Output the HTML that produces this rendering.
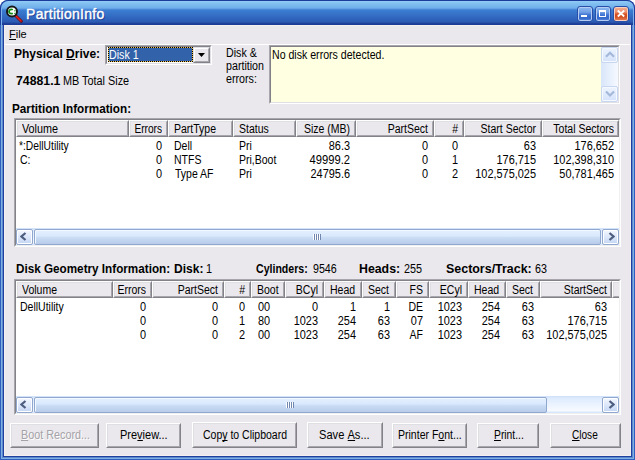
<!DOCTYPE html><html><head><meta charset="utf-8"><style>
*{margin:0;padding:0;box-sizing:border-box}
html,body{width:635px;height:460px;overflow:hidden;background:#fff}
.b{position:absolute}
.t,.tb{position:absolute;font-family:"Liberation Sans",sans-serif;font-size:12px;line-height:13px;white-space:nowrap;color:#000}
.tb{font-weight:bold}
u{text-decoration:none;border-bottom:1px solid currentColor;display:inline-block;line-height:10px}
</style></head><body>
<div class="b" style="left:0;top:0;width:635px;height:460px;background:#2E5EC0;border-radius:8px 8px 0 0"></div>
<div class="b" style="left:0;top:0;width:635px;height:25px;border-radius:8px 8px 0 0;border:1px solid #1C3C9C;border-bottom:none;box-shadow:inset 1px 0 0 #7EB2EC,inset -1px 0 0 #7EB2EC;background:linear-gradient(to bottom,#1E3C9C 0px,#1E3C9C 1px,#92CDF6 1px,#84C2F2 3px,#70AEEA 8px,#5896E0 9px,#3C7ED2 10px,#3A7BD0 11px,#2C5AB4 22px,#24489F 23px,#1C3A96 24px,#1C3A96 25px);background-origin:border-box"></div>
<div class="b" style="left:0px;top:25px;width:1px;height:435px;background:#2E5EC0"></div>
<div class="b" style="left:634px;top:25px;width:1px;height:435px;background:#2E5EC0"></div>
<div class="b" style="left:0px;top:459px;width:635px;height:1px;background:#2E5EC0"></div>
<div class="b" style="left:1px;top:25px;width:1px;height:434px;background:#80B0E0"></div>
<div class="b" style="left:633px;top:25px;width:1px;height:434px;background:#80B0E0"></div>
<div class="b" style="left:1px;top:458px;width:633px;height:1px;background:#80B0E0"></div>
<div class="b" style="left:2px;top:25px;width:1px;height:433px;background:#5C88D0"></div>
<div class="b" style="left:632px;top:25px;width:1px;height:433px;background:#5C88D0"></div>
<div class="b" style="left:2px;top:457px;width:631px;height:1px;background:#5C88D0"></div>
<div class="b" style="left:3px;top:25px;width:1px;height:432px;background:#2040A0"></div>
<div class="b" style="left:631px;top:25px;width:1px;height:432px;background:#2040A0"></div>
<div class="b" style="left:3px;top:456px;width:629px;height:1px;background:#2040A0"></div>
<div class="b" style="left:4px;top:25px;width:627px;height:431px;background:#F5F0F0"></div>
<div class="b" style="left:5px;top:26px;width:625px;height:429px;background:#EAE8EC"></div>
<div class="b" style="left:5px;top:44px;width:625px;height:1px;background:#FFFFFF"></div>
<div class="b" style="left:26px;top:6px;font-family:'Liberation Sans',sans-serif;font-size:14px;line-height:17px;color:#fff;-webkit-text-stroke:0.4px #fff;text-shadow:1px 1px 0 #1E3A90;white-space:nowrap;letter-spacing:0.3px">PartitionInfo</div>
<svg class="b" style="left:5px;top:5px" width="18" height="18" viewBox="0 0 18 18">
<line x1="11" y1="11" x2="16.3" y2="16.3" stroke="#601010" stroke-width="3" stroke-linecap="round"/>
<line x1="11" y1="11" x2="16" y2="16" stroke="#F01818" stroke-width="1.6" stroke-linecap="round"/>
<circle cx="7" cy="6.4" r="5" fill="#fff" stroke="#181818" stroke-width="2"/>
<path d="M7.7 4.9 A2.1 2.2 0 1 0 7.7 8.1" stroke="#108A10" stroke-width="1.7" fill="none"/>
<rect x="9.3" y="5.2" width="1.2" height="1.2" fill="#108A10"/><rect x="9.3" y="7.8" width="1.2" height="1.2" fill="#108A10"/>
</svg>
<div class="b" style="left:577px;top:6px;width:16px;height:16px;border-radius:3px;border:1px solid #2850A8;box-shadow:inset 0 0 0 1px #B4CCF2;background:linear-gradient(to bottom,#8CB8F0 0px,#74A2E6 5px,#3E74D4 8px,#3468CA 11px,#5080D8 13px)"></div>
<div class="b" style="left:595px;top:6px;width:16px;height:16px;border-radius:3px;border:1px solid #2850A8;box-shadow:inset 0 0 0 1px #B4CCF2;background:linear-gradient(to bottom,#8CB8F0 0px,#74A2E6 5px,#3E74D4 8px,#3468CA 11px,#5080D8 13px)"></div>
<div class="b" style="left:613px;top:6px;width:16px;height:16px;border-radius:3px;border:1px solid #2850A8;box-shadow:inset 0 0 0 1px #F8D0C0;background:linear-gradient(to bottom,#F4B090 0px,#EC9070 5px,#D85828 7px,#D04818 9px,#E07850 13px)"></div>
<div class="b" style="left:581px;top:15px;width:6px;height:2px;background:#fff"></div>
<div class="b" style="left:599px;top:10px;width:7px;height:7px;border:1px solid #fff;border-top-width:2px"></div>
<svg class="b" style="left:617px;top:10px" width="8" height="7" viewBox="0 0 8 7"><path d="M0.8 0.5 L7.2 6.5 M7.2 0.5 L0.8 6.5" stroke="#fff" stroke-width="1.9"/></svg>
<div class="t" style="left:9.00px;top:28px;transform:scaleX(1.0000);transform-origin:0 0;font-size:11px;"><u>F</u>ile</div>
<div class="tb" style="left:14.00px;top:48px;transform:scaleX(1.0008);transform-origin:0 0;">Physical <u>D</u>rive:</div>
<div class="b" style="left:105px;top:45px;width:107px;height:20px;background:#fff;border-top:1px solid #A7A6AC;border-left:1px solid #A7A6AC;border-right:1px solid #fff;border-bottom:1px solid #fff"></div>
<div class="b" style="left:106px;top:46px;width:105px;height:18px;border-top:1px solid #828288;border-left:1px solid #828288;border-right:1px solid #E0E0E4;border-bottom:1px solid #E0E0E4"></div>
<div class="b" style="left:108px;top:47px;width:85px;height:15px;border:1px dotted #000;background:#F0C050"></div>
<div class="b" style="left:109px;top:48px;width:83px;height:13px;background:#3262AA"></div>
<div class="t" style="left:109.00px;top:49px;transform:scaleX(0.8900);transform-origin:0 0;color:#fff;">Disk 1</div>
<div class="b" style="left:193px;top:47px;width:17px;height:16px;background:#EAE8EC;border-top:1px solid #DEDFE3;border-left:1px solid #DEDFE3;border-right:1px solid #828288;border-bottom:1px solid #828288"></div>
<div class="b" style="left:194px;top:48px;width:15px;height:14px;border-top:1px solid #fff;border-left:1px solid #fff;border-right:1px solid #A7A6AC;border-bottom:1px solid #A7A6AC"></div>
<svg class="b" style="left:198px;top:53px" width="7" height="4" viewBox="0 0 7 4"><path d="M0 0H7L3.5 4Z" fill="#000"/></svg>
<div class="tb" style="left:16.00px;top:75px;transform:scaleX(1.0233);transform-origin:0 0;">74881.1</div>
<div class="t" style="left:63.00px;top:75px;transform:scaleX(0.9039);transform-origin:0 0;">MB Total Size</div>
<div class="t" style="left:226.00px;top:47px;transform:scaleX(0.8900);transform-origin:0 0;">Disk &amp;</div>
<div class="t" style="left:226.00px;top:60px;transform:scaleX(0.8900);transform-origin:0 0;">partition</div>
<div class="t" style="left:226.00px;top:73px;transform:scaleX(0.8900);transform-origin:0 0;">errors:</div>
<div class="b" style="left:269px;top:45px;width:351px;height:59px;background:#FFFFE1;border-top:1px solid #A7A6AC;border-left:1px solid #A7A6AC;border-right:1px solid #fff;border-bottom:1px solid #fff"></div>
<div class="b" style="left:270px;top:46px;width:349px;height:57px;border-top:1px solid #828288;border-left:1px solid #828288;border-right:1px solid #E0E0E4;border-bottom:1px solid #E0E0E4"></div>
<div class="t" style="left:272.00px;top:49px;transform:scaleX(0.8819);transform-origin:0 0;">No disk errors detected.</div>
<div class="b" style="left:601px;top:47px;width:17px;height:55px;background:linear-gradient(to right,#D8E6FA,#F6F9FF)"></div>
<div class="b" style="left:601px;top:47px;width:17px;height:16px;border-radius:2px;border:1px solid #C8D6F0;box-shadow:inset 0 0 0 1px #F4F8FF;background:linear-gradient(to bottom,#EEF4FE,#D4E2FA)"></div>
<svg class="b" style="left:605px;top:51px" width="10" height="8" viewBox="0 0 10 8"><path d="M1 5.8 L5 1.8 L9 5.8" stroke="#A4B8DA" stroke-width="2.2" fill="none"/></svg>
<div class="b" style="left:601px;top:86px;width:17px;height:16px;border-radius:2px;border:1px solid #C8D6F0;box-shadow:inset 0 0 0 1px #F4F8FF;background:linear-gradient(to bottom,#EEF4FE,#D4E2FA)"></div>
<svg class="b" style="left:605px;top:90px" width="10" height="8" viewBox="0 0 10 8"><path d="M1 1.5 L5 5.5 L9 1.5" stroke="#A4B8DA" stroke-width="2.2" fill="none"/></svg>
<div class="tb" style="left:12.00px;top:103px;transform:scaleX(0.9757);transform-origin:0 0;">Partition Information:</div>
<div class="b" style="left:14px;top:118px;width:607px;height:129px;background:#fff;border-top:1px solid #A7A6AC;border-left:1px solid #A7A6AC;border-right:1px solid #fff;border-bottom:1px solid #fff"></div>
<div class="b" style="left:15px;top:119px;width:605px;height:127px;border-top:1px solid #828288;border-left:1px solid #828288;border-right:1px solid #F0F0F0;border-bottom:1px solid #F0F0F0"></div>
<div class="b" style="left:16px;top:120px;width:113px;height:17px;background:#EAE8EC;border-top:1px solid #fff;border-left:1px solid #fff;border-right:1px solid #828288;border-bottom:1px solid #828288"></div>
<div class="b" style="left:17px;top:121px;width:111px;height:15px;border-top:1px solid #DEDFE3;border-left:1px solid #DEDFE3;border-right:1px solid #A7A6AC;border-bottom:1px solid #A7A6AC"></div>
<div class="t" style="left:22.00px;top:123px;transform:scaleX(0.9000);transform-origin:0 0;">Volume</div>
<div class="b" style="left:129px;top:120px;width:39px;height:17px;background:#EAE8EC;border-top:1px solid #fff;border-left:1px solid #fff;border-right:1px solid #828288;border-bottom:1px solid #828288"></div>
<div class="b" style="left:130px;top:121px;width:37px;height:15px;border-top:1px solid #DEDFE3;border-left:1px solid #DEDFE3;border-right:1px solid #A7A6AC;border-bottom:1px solid #A7A6AC"></div>
<div class="t" style="left:-238.00px;width:400px;text-align:right;top:123px;transform:scaleX(0.8438);transform-origin:100% 0;">Errors</div>
<div class="b" style="left:168px;top:120px;width:65px;height:17px;background:#EAE8EC;border-top:1px solid #fff;border-left:1px solid #fff;border-right:1px solid #828288;border-bottom:1px solid #828288"></div>
<div class="b" style="left:169px;top:121px;width:63px;height:15px;border-top:1px solid #DEDFE3;border-left:1px solid #DEDFE3;border-right:1px solid #A7A6AC;border-bottom:1px solid #A7A6AC"></div>
<div class="t" style="left:174.00px;top:123px;transform:scaleX(0.8750);transform-origin:0 0;">PartType</div>
<div class="b" style="left:233px;top:120px;width:63px;height:17px;background:#EAE8EC;border-top:1px solid #fff;border-left:1px solid #fff;border-right:1px solid #828288;border-bottom:1px solid #828288"></div>
<div class="b" style="left:234px;top:121px;width:61px;height:15px;border-top:1px solid #DEDFE3;border-left:1px solid #DEDFE3;border-right:1px solid #A7A6AC;border-bottom:1px solid #A7A6AC"></div>
<div class="t" style="left:239.00px;top:123px;transform:scaleX(0.8750);transform-origin:0 0;">Status</div>
<div class="b" style="left:296px;top:120px;width:60px;height:17px;background:#EAE8EC;border-top:1px solid #fff;border-left:1px solid #fff;border-right:1px solid #828288;border-bottom:1px solid #828288"></div>
<div class="b" style="left:297px;top:121px;width:58px;height:15px;border-top:1px solid #DEDFE3;border-left:1px solid #DEDFE3;border-right:1px solid #A7A6AC;border-bottom:1px solid #A7A6AC"></div>
<div class="t" style="left:-50.00px;width:400px;text-align:right;top:123px;transform:scaleX(0.8750);transform-origin:100% 0;">Size (MB)</div>
<div class="b" style="left:356px;top:120px;width:78px;height:17px;background:#EAE8EC;border-top:1px solid #fff;border-left:1px solid #fff;border-right:1px solid #828288;border-bottom:1px solid #828288"></div>
<div class="b" style="left:357px;top:121px;width:76px;height:15px;border-top:1px solid #DEDFE3;border-left:1px solid #DEDFE3;border-right:1px solid #A7A6AC;border-bottom:1px solid #A7A6AC"></div>
<div class="t" style="left:28.00px;width:400px;text-align:right;top:123px;transform:scaleX(0.8750);transform-origin:100% 0;">PartSect</div>
<div class="b" style="left:434px;top:120px;width:30px;height:17px;background:#EAE8EC;border-top:1px solid #fff;border-left:1px solid #fff;border-right:1px solid #828288;border-bottom:1px solid #828288"></div>
<div class="b" style="left:435px;top:121px;width:28px;height:15px;border-top:1px solid #DEDFE3;border-left:1px solid #DEDFE3;border-right:1px solid #A7A6AC;border-bottom:1px solid #A7A6AC"></div>
<div class="t" style="left:58.00px;width:400px;text-align:right;top:123px;transform:scaleX(0.8750);transform-origin:100% 0;">#</div>
<div class="b" style="left:464px;top:120px;width:78px;height:17px;background:#EAE8EC;border-top:1px solid #fff;border-left:1px solid #fff;border-right:1px solid #828288;border-bottom:1px solid #828288"></div>
<div class="b" style="left:465px;top:121px;width:76px;height:15px;border-top:1px solid #DEDFE3;border-left:1px solid #DEDFE3;border-right:1px solid #A7A6AC;border-bottom:1px solid #A7A6AC"></div>
<div class="t" style="left:136.00px;width:400px;text-align:right;top:123px;transform:scaleX(0.8750);transform-origin:100% 0;">Start Sector</div>
<div class="b" style="left:542px;top:120px;width:77px;height:17px;background:#EAE8EC;border-top:1px solid #fff;border-left:1px solid #fff;border-right:1px solid #828288;border-bottom:1px solid #828288"></div>
<div class="b" style="left:543px;top:121px;width:75px;height:15px;border-top:1px solid #DEDFE3;border-left:1px solid #DEDFE3;border-right:1px solid #A7A6AC;border-bottom:1px solid #A7A6AC"></div>
<div class="t" style="left:214.00px;width:400px;text-align:right;top:123px;transform:scaleX(0.8750);transform-origin:100% 0;">Total Sectors</div>
<div class="t" style="left:19.00px;top:140px;transform:scaleX(0.8578);transform-origin:0 0;">*:DellUtility</div>
<div class="t" style="left:-238.00px;width:400px;text-align:right;top:140px;transform:scaleX(0.9100);transform-origin:100% 0;">0</div>
<div class="t" style="left:174.00px;top:140px;transform:scaleX(0.8750);transform-origin:0 0;">Dell</div>
<div class="t" style="left:239.00px;top:140px;transform:scaleX(0.8750);transform-origin:0 0;">Pri</div>
<div class="t" style="left:-50.00px;width:400px;text-align:right;top:140px;transform:scaleX(0.9100);transform-origin:100% 0;">86.3</div>
<div class="t" style="left:28.00px;width:400px;text-align:right;top:140px;transform:scaleX(0.9100);transform-origin:100% 0;">0</div>
<div class="t" style="left:58.00px;width:400px;text-align:right;top:140px;transform:scaleX(0.9100);transform-origin:100% 0;">0</div>
<div class="t" style="left:136.00px;width:400px;text-align:right;top:140px;transform:scaleX(0.9100);transform-origin:100% 0;">63</div>
<div class="t" style="left:214.00px;width:400px;text-align:right;top:140px;transform:scaleX(0.9100);transform-origin:100% 0;">176,652</div>
<div class="t" style="left:20.00px;top:154px;transform:scaleX(0.8750);transform-origin:0 0;">C:</div>
<div class="t" style="left:-238.00px;width:400px;text-align:right;top:154px;transform:scaleX(0.9100);transform-origin:100% 0;">0</div>
<div class="t" style="left:174.00px;top:154px;transform:scaleX(0.8750);transform-origin:0 0;">NTFS</div>
<div class="t" style="left:239.00px;top:154px;transform:scaleX(0.8750);transform-origin:0 0;">Pri,Boot</div>
<div class="t" style="left:-50.00px;width:400px;text-align:right;top:154px;transform:scaleX(0.9333);transform-origin:100% 0;">49999.2</div>
<div class="t" style="left:28.00px;width:400px;text-align:right;top:154px;transform:scaleX(0.9100);transform-origin:100% 0;">0</div>
<div class="t" style="left:58.00px;width:400px;text-align:right;top:154px;transform:scaleX(0.9100);transform-origin:100% 0;">1</div>
<div class="t" style="left:136.00px;width:400px;text-align:right;top:154px;transform:scaleX(0.9100);transform-origin:100% 0;">176,715</div>
<div class="t" style="left:214.00px;width:400px;text-align:right;top:154px;transform:scaleX(0.9100);transform-origin:100% 0;">102,398,310</div>
<div class="t" style="left:-238.00px;width:400px;text-align:right;top:168px;transform:scaleX(0.9100);transform-origin:100% 0;">0</div>
<div class="t" style="left:175.00px;top:168px;transform:scaleX(0.8750);transform-origin:0 0;">Type AF</div>
<div class="t" style="left:239.00px;top:168px;transform:scaleX(0.8750);transform-origin:0 0;">Pri</div>
<div class="t" style="left:-50.00px;width:400px;text-align:right;top:168px;transform:scaleX(0.9100);transform-origin:100% 0;">24795.6</div>
<div class="t" style="left:28.00px;width:400px;text-align:right;top:168px;transform:scaleX(0.9100);transform-origin:100% 0;">0</div>
<div class="t" style="left:58.00px;width:400px;text-align:right;top:168px;transform:scaleX(0.9100);transform-origin:100% 0;">2</div>
<div class="t" style="left:136.00px;width:400px;text-align:right;top:168px;transform:scaleX(0.9100);transform-origin:100% 0;">102,575,025</div>
<div class="t" style="left:214.00px;width:400px;text-align:right;top:168px;transform:scaleX(0.9100);transform-origin:100% 0;">50,781,465</div>
<div class="b" style="left:16px;top:228px;width:603px;height:17px;background:linear-gradient(to bottom,#D2E2F9 0px,#D2E2F9 1px,#DDEBFD 2px,#F0F6FF 11px,#F8FBFF 15px,#D6E6FB 16px,#D6E6FB 17px)"></div>
<div class="b" style="left:16px;top:229px;width:17px;height:16px;border-radius:2px;border:1px solid #90A8D0;box-shadow:inset 0 0 0 1px #FFFFFF;background:linear-gradient(to bottom,#F4F8FF,#C4D6F4)"></div>
<svg class="b" style="left:20px;top:232px" width="7" height="9" viewBox="0 0 7 9"><path d="M5.5 1 L1.5 4.5 L5.5 8" stroke="#4D5E80" stroke-width="2.2" fill="none"/></svg>
<div class="b" style="left:602px;top:229px;width:17px;height:16px;border-radius:2px;border:1px solid #90A8D0;box-shadow:inset 0 0 0 1px #FFFFFF;background:linear-gradient(to bottom,#F4F8FF,#C4D6F4)"></div>
<svg class="b" style="left:608px;top:232px" width="7" height="9" viewBox="0 0 7 9"><path d="M1.5 1 L5.5 4.5 L1.5 8" stroke="#4D5E80" stroke-width="2.2" fill="none"/></svg>
<div class="b" style="left:34px;top:229px;width:567px;height:16px;border-radius:2px;border:1px solid #90A8D0;box-shadow:inset 1px 1px 0 #F4F8FF;background:linear-gradient(to bottom,#E4F0FF 0%,#DAE9FD 42%,#C9DCF4 55%,#B8CCEA 100%)"></div>
<div class="b" style="left:313px;top:234px;width:1px;height:6px;background:#fff"></div>
<div class="b" style="left:314px;top:234px;width:1px;height:6px;background:#7088B0"></div>
<div class="b" style="left:315px;top:234px;width:1px;height:6px;background:#fff"></div>
<div class="b" style="left:316px;top:234px;width:1px;height:6px;background:#7088B0"></div>
<div class="b" style="left:317px;top:234px;width:1px;height:6px;background:#fff"></div>
<div class="b" style="left:318px;top:234px;width:1px;height:6px;background:#7088B0"></div>
<div class="b" style="left:319px;top:234px;width:1px;height:6px;background:#fff"></div>
<div class="b" style="left:320px;top:234px;width:1px;height:6px;background:#7088B0"></div>
<div class="tb" style="left:16.00px;top:263px;transform:scaleX(0.9750);transform-origin:0 0;">Disk Geometry Information:</div>
<div class="tb" style="left:174.00px;top:263px;transform:scaleX(1.0018);transform-origin:0 0;">Disk:</div>
<div class="t" style="left:206.00px;top:263px;transform:scaleX(0.9100);transform-origin:0 0;">1</div>
<div class="tb" style="left:256.00px;top:263px;transform:scaleX(0.8813);transform-origin:0 0;">Cylinders:</div>
<div class="t" style="left:313.00px;top:263px;transform:scaleX(0.8890);transform-origin:0 0;">9546</div>
<div class="tb" style="left:359.00px;top:263px;transform:scaleX(1.0277);transform-origin:0 0;">Heads:</div>
<div class="t" style="left:404.00px;top:263px;transform:scaleX(0.9000);transform-origin:0 0;">255</div>
<div class="tb" style="left:446.00px;top:263px;transform:scaleX(1.0366);transform-origin:0 0;">Sectors/Track:</div>
<div class="t" style="left:535.00px;top:263px;transform:scaleX(0.8950);transform-origin:0 0;">63</div>
<div class="b" style="left:14px;top:279px;width:607px;height:136px;background:#fff;border-top:1px solid #A7A6AC;border-left:1px solid #A7A6AC;border-right:1px solid #fff;border-bottom:1px solid #fff"></div>
<div class="b" style="left:15px;top:280px;width:605px;height:134px;border-top:1px solid #828288;border-left:1px solid #828288;border-right:1px solid #F0F0F0;border-bottom:1px solid #F0F0F0"></div>
<div class="b" style="left:16px;top:281px;width:97px;height:17px;background:#EAE8EC;border-top:1px solid #fff;border-left:1px solid #fff;border-right:1px solid #828288;border-bottom:1px solid #828288"></div>
<div class="b" style="left:17px;top:282px;width:95px;height:15px;border-top:1px solid #DEDFE3;border-left:1px solid #DEDFE3;border-right:1px solid #A7A6AC;border-bottom:1px solid #A7A6AC"></div>
<div class="t" style="left:22.00px;top:284px;transform:scaleX(0.8750);transform-origin:0 0;">Volume</div>
<div class="b" style="left:113px;top:281px;width:39px;height:17px;background:#EAE8EC;border-top:1px solid #fff;border-left:1px solid #fff;border-right:1px solid #828288;border-bottom:1px solid #828288"></div>
<div class="b" style="left:114px;top:282px;width:37px;height:15px;border-top:1px solid #DEDFE3;border-left:1px solid #DEDFE3;border-right:1px solid #A7A6AC;border-bottom:1px solid #A7A6AC"></div>
<div class="t" style="left:-254.00px;width:400px;text-align:right;top:284px;transform:scaleX(0.8750);transform-origin:100% 0;">Errors</div>
<div class="b" style="left:152px;top:281px;width:72px;height:17px;background:#EAE8EC;border-top:1px solid #fff;border-left:1px solid #fff;border-right:1px solid #828288;border-bottom:1px solid #828288"></div>
<div class="b" style="left:153px;top:282px;width:70px;height:15px;border-top:1px solid #DEDFE3;border-left:1px solid #DEDFE3;border-right:1px solid #A7A6AC;border-bottom:1px solid #A7A6AC"></div>
<div class="t" style="left:-182.00px;width:400px;text-align:right;top:284px;transform:scaleX(0.8750);transform-origin:100% 0;">PartSect</div>
<div class="b" style="left:224px;top:281px;width:27px;height:17px;background:#EAE8EC;border-top:1px solid #fff;border-left:1px solid #fff;border-right:1px solid #828288;border-bottom:1px solid #828288"></div>
<div class="b" style="left:225px;top:282px;width:25px;height:15px;border-top:1px solid #DEDFE3;border-left:1px solid #DEDFE3;border-right:1px solid #A7A6AC;border-bottom:1px solid #A7A6AC"></div>
<div class="t" style="left:-155.00px;width:400px;text-align:right;top:284px;transform:scaleX(0.8750);transform-origin:100% 0;">#</div>
<div class="b" style="left:251px;top:281px;width:34px;height:17px;background:#EAE8EC;border-top:1px solid #fff;border-left:1px solid #fff;border-right:1px solid #828288;border-bottom:1px solid #828288"></div>
<div class="b" style="left:252px;top:282px;width:32px;height:15px;border-top:1px solid #DEDFE3;border-left:1px solid #DEDFE3;border-right:1px solid #A7A6AC;border-bottom:1px solid #A7A6AC"></div>
<div class="t" style="left:257.00px;top:284px;transform:scaleX(0.8750);transform-origin:0 0;">Boot</div>
<div class="b" style="left:285px;top:281px;width:39px;height:17px;background:#EAE8EC;border-top:1px solid #fff;border-left:1px solid #fff;border-right:1px solid #828288;border-bottom:1px solid #828288"></div>
<div class="b" style="left:286px;top:282px;width:37px;height:15px;border-top:1px solid #DEDFE3;border-left:1px solid #DEDFE3;border-right:1px solid #A7A6AC;border-bottom:1px solid #A7A6AC"></div>
<div class="t" style="left:-82.00px;width:400px;text-align:right;top:284px;transform:scaleX(0.8750);transform-origin:100% 0;">BCyl</div>
<div class="b" style="left:324px;top:281px;width:38px;height:17px;background:#EAE8EC;border-top:1px solid #fff;border-left:1px solid #fff;border-right:1px solid #828288;border-bottom:1px solid #828288"></div>
<div class="b" style="left:325px;top:282px;width:36px;height:15px;border-top:1px solid #DEDFE3;border-left:1px solid #DEDFE3;border-right:1px solid #A7A6AC;border-bottom:1px solid #A7A6AC"></div>
<div class="t" style="left:330.00px;top:284px;transform:scaleX(0.8750);transform-origin:0 0;">Head</div>
<div class="b" style="left:362px;top:281px;width:34px;height:17px;background:#EAE8EC;border-top:1px solid #fff;border-left:1px solid #fff;border-right:1px solid #828288;border-bottom:1px solid #828288"></div>
<div class="b" style="left:363px;top:282px;width:32px;height:15px;border-top:1px solid #DEDFE3;border-left:1px solid #DEDFE3;border-right:1px solid #A7A6AC;border-bottom:1px solid #A7A6AC"></div>
<div class="t" style="left:368.00px;top:284px;transform:scaleX(0.8750);transform-origin:0 0;">Sect</div>
<div class="b" style="left:396px;top:281px;width:33px;height:17px;background:#EAE8EC;border-top:1px solid #fff;border-left:1px solid #fff;border-right:1px solid #828288;border-bottom:1px solid #828288"></div>
<div class="b" style="left:397px;top:282px;width:31px;height:15px;border-top:1px solid #DEDFE3;border-left:1px solid #DEDFE3;border-right:1px solid #A7A6AC;border-bottom:1px solid #A7A6AC"></div>
<div class="t" style="left:23.00px;width:400px;text-align:right;top:284px;transform:scaleX(0.8750);transform-origin:100% 0;">FS</div>
<div class="b" style="left:429px;top:281px;width:39px;height:17px;background:#EAE8EC;border-top:1px solid #fff;border-left:1px solid #fff;border-right:1px solid #828288;border-bottom:1px solid #828288"></div>
<div class="b" style="left:430px;top:282px;width:37px;height:15px;border-top:1px solid #DEDFE3;border-left:1px solid #DEDFE3;border-right:1px solid #A7A6AC;border-bottom:1px solid #A7A6AC"></div>
<div class="t" style="left:62.00px;width:400px;text-align:right;top:284px;transform:scaleX(0.8750);transform-origin:100% 0;">ECyl</div>
<div class="b" style="left:468px;top:281px;width:38px;height:17px;background:#EAE8EC;border-top:1px solid #fff;border-left:1px solid #fff;border-right:1px solid #828288;border-bottom:1px solid #828288"></div>
<div class="b" style="left:469px;top:282px;width:36px;height:15px;border-top:1px solid #DEDFE3;border-left:1px solid #DEDFE3;border-right:1px solid #A7A6AC;border-bottom:1px solid #A7A6AC"></div>
<div class="t" style="left:474.00px;top:284px;transform:scaleX(0.8750);transform-origin:0 0;">Head</div>
<div class="b" style="left:506px;top:281px;width:34px;height:17px;background:#EAE8EC;border-top:1px solid #fff;border-left:1px solid #fff;border-right:1px solid #828288;border-bottom:1px solid #828288"></div>
<div class="b" style="left:507px;top:282px;width:32px;height:15px;border-top:1px solid #DEDFE3;border-left:1px solid #DEDFE3;border-right:1px solid #A7A6AC;border-bottom:1px solid #A7A6AC"></div>
<div class="t" style="left:512.00px;top:284px;transform:scaleX(0.8750);transform-origin:0 0;">Sect</div>
<div class="b" style="left:540px;top:281px;width:72px;height:17px;background:#EAE8EC;border-top:1px solid #fff;border-left:1px solid #fff;border-right:1px solid #828288;border-bottom:1px solid #828288"></div>
<div class="b" style="left:541px;top:282px;width:70px;height:15px;border-top:1px solid #DEDFE3;border-left:1px solid #DEDFE3;border-right:1px solid #A7A6AC;border-bottom:1px solid #A7A6AC"></div>
<div class="t" style="left:207.00px;width:400px;text-align:right;top:284px;transform:scaleX(0.8750);transform-origin:100% 0;">StartSect</div>
<div class="b" style="left:612px;top:281px;width:7px;height:17px;background:#EAE8EC;border-top:1px solid #fff;border-left:1px solid #fff;border-bottom:1px solid #828288"></div>
<div class="b" style="left:613px;top:282px;width:6px;height:15px;border-top:1px solid #DEDFE3;border-left:1px solid #DEDFE3;border-bottom:1px solid #A7A6AC"></div>
<div class="t" style="left:20.00px;top:301px;transform:scaleX(0.8750);transform-origin:0 0;">DellUtility</div>
<div class="t" style="left:-254.00px;width:400px;text-align:right;top:301px;transform:scaleX(0.9100);transform-origin:100% 0;">0</div>
<div class="t" style="left:-182.00px;width:400px;text-align:right;top:301px;transform:scaleX(0.9100);transform-origin:100% 0;">0</div>
<div class="t" style="left:-155.00px;width:400px;text-align:right;top:301px;transform:scaleX(0.9100);transform-origin:100% 0;">0</div>
<div class="t" style="left:258.00px;top:301px;transform:scaleX(0.9100);transform-origin:0 0;">00</div>
<div class="t" style="left:-82.00px;width:400px;text-align:right;top:301px;transform:scaleX(0.9100);transform-origin:100% 0;">0</div>
<div class="t" style="left:-44.00px;width:400px;text-align:right;top:301px;transform:scaleX(0.9100);transform-origin:100% 0;">1</div>
<div class="t" style="left:-10.00px;width:400px;text-align:right;top:301px;transform:scaleX(0.9100);transform-origin:100% 0;">1</div>
<div class="t" style="left:23.00px;width:400px;text-align:right;top:301px;transform:scaleX(0.8750);transform-origin:100% 0;">DE</div>
<div class="t" style="left:62.00px;width:400px;text-align:right;top:301px;transform:scaleX(0.9100);transform-origin:100% 0;">1023</div>
<div class="t" style="left:100.00px;width:400px;text-align:right;top:301px;transform:scaleX(0.9100);transform-origin:100% 0;">254</div>
<div class="t" style="left:134.00px;width:400px;text-align:right;top:301px;transform:scaleX(0.9100);transform-origin:100% 0;">63</div>
<div class="t" style="left:207.00px;width:400px;text-align:right;top:301px;transform:scaleX(0.9100);transform-origin:100% 0;">63</div>
<div class="t" style="left:-254.00px;width:400px;text-align:right;top:315px;transform:scaleX(0.9100);transform-origin:100% 0;">0</div>
<div class="t" style="left:-182.00px;width:400px;text-align:right;top:315px;transform:scaleX(0.9100);transform-origin:100% 0;">0</div>
<div class="t" style="left:-155.00px;width:400px;text-align:right;top:315px;transform:scaleX(0.9100);transform-origin:100% 0;">1</div>
<div class="t" style="left:258.00px;top:315px;transform:scaleX(0.9100);transform-origin:0 0;">80</div>
<div class="t" style="left:-82.00px;width:400px;text-align:right;top:315px;transform:scaleX(0.9100);transform-origin:100% 0;">1023</div>
<div class="t" style="left:-44.00px;width:400px;text-align:right;top:315px;transform:scaleX(0.9100);transform-origin:100% 0;">254</div>
<div class="t" style="left:-10.00px;width:400px;text-align:right;top:315px;transform:scaleX(0.9100);transform-origin:100% 0;">63</div>
<div class="t" style="left:23.00px;width:400px;text-align:right;top:315px;transform:scaleX(0.9100);transform-origin:100% 0;">07</div>
<div class="t" style="left:62.00px;width:400px;text-align:right;top:315px;transform:scaleX(0.9100);transform-origin:100% 0;">1023</div>
<div class="t" style="left:100.00px;width:400px;text-align:right;top:315px;transform:scaleX(0.9100);transform-origin:100% 0;">254</div>
<div class="t" style="left:134.00px;width:400px;text-align:right;top:315px;transform:scaleX(0.9100);transform-origin:100% 0;">63</div>
<div class="t" style="left:207.00px;width:400px;text-align:right;top:315px;transform:scaleX(0.9100);transform-origin:100% 0;">176,715</div>
<div class="t" style="left:-254.00px;width:400px;text-align:right;top:329px;transform:scaleX(0.9100);transform-origin:100% 0;">0</div>
<div class="t" style="left:-182.00px;width:400px;text-align:right;top:329px;transform:scaleX(0.9100);transform-origin:100% 0;">0</div>
<div class="t" style="left:-155.00px;width:400px;text-align:right;top:329px;transform:scaleX(0.9100);transform-origin:100% 0;">2</div>
<div class="t" style="left:258.00px;top:329px;transform:scaleX(0.9100);transform-origin:0 0;">00</div>
<div class="t" style="left:-82.00px;width:400px;text-align:right;top:329px;transform:scaleX(0.9100);transform-origin:100% 0;">1023</div>
<div class="t" style="left:-44.00px;width:400px;text-align:right;top:329px;transform:scaleX(0.9100);transform-origin:100% 0;">254</div>
<div class="t" style="left:-10.00px;width:400px;text-align:right;top:329px;transform:scaleX(0.9100);transform-origin:100% 0;">63</div>
<div class="t" style="left:23.00px;width:400px;text-align:right;top:329px;transform:scaleX(0.8750);transform-origin:100% 0;">AF</div>
<div class="t" style="left:62.00px;width:400px;text-align:right;top:329px;transform:scaleX(0.9100);transform-origin:100% 0;">1023</div>
<div class="t" style="left:100.00px;width:400px;text-align:right;top:329px;transform:scaleX(0.9100);transform-origin:100% 0;">254</div>
<div class="t" style="left:134.00px;width:400px;text-align:right;top:329px;transform:scaleX(0.9100);transform-origin:100% 0;">63</div>
<div class="t" style="left:207.00px;width:400px;text-align:right;top:329px;transform:scaleX(0.9100);transform-origin:100% 0;">102,575,025</div>
<div class="b" style="left:16px;top:396px;width:603px;height:17px;background:linear-gradient(to bottom,#D2E2F9 0px,#D2E2F9 1px,#DDEBFD 2px,#F0F6FF 11px,#F8FBFF 15px,#D6E6FB 16px,#D6E6FB 17px)"></div>
<div class="b" style="left:16px;top:397px;width:17px;height:16px;border-radius:2px;border:1px solid #90A8D0;box-shadow:inset 0 0 0 1px #FFFFFF;background:linear-gradient(to bottom,#F4F8FF,#C4D6F4)"></div>
<svg class="b" style="left:20px;top:400px" width="7" height="9" viewBox="0 0 7 9"><path d="M5.5 1 L1.5 4.5 L5.5 8" stroke="#4D5E80" stroke-width="2.2" fill="none"/></svg>
<div class="b" style="left:602px;top:397px;width:17px;height:16px;border-radius:2px;border:1px solid #90A8D0;box-shadow:inset 0 0 0 1px #FFFFFF;background:linear-gradient(to bottom,#F4F8FF,#C4D6F4)"></div>
<svg class="b" style="left:608px;top:400px" width="7" height="9" viewBox="0 0 7 9"><path d="M1.5 1 L5.5 4.5 L1.5 8" stroke="#4D5E80" stroke-width="2.2" fill="none"/></svg>
<div class="b" style="left:34px;top:397px;width:513px;height:16px;border-radius:2px;border:1px solid #90A8D0;box-shadow:inset 1px 1px 0 #F4F8FF;background:linear-gradient(to bottom,#E4F0FF 0%,#DAE9FD 42%,#C9DCF4 55%,#B8CCEA 100%)"></div>
<div class="b" style="left:286px;top:402px;width:1px;height:6px;background:#fff"></div>
<div class="b" style="left:287px;top:402px;width:1px;height:6px;background:#7088B0"></div>
<div class="b" style="left:288px;top:402px;width:1px;height:6px;background:#fff"></div>
<div class="b" style="left:289px;top:402px;width:1px;height:6px;background:#7088B0"></div>
<div class="b" style="left:290px;top:402px;width:1px;height:6px;background:#fff"></div>
<div class="b" style="left:291px;top:402px;width:1px;height:6px;background:#7088B0"></div>
<div class="b" style="left:292px;top:402px;width:1px;height:6px;background:#fff"></div>
<div class="b" style="left:293px;top:402px;width:1px;height:6px;background:#7088B0"></div>
<div class="b" style="left:10px;top:423px;width:89px;height:25px;background:#EAE8EC;border-top:1px solid #fff;border-left:1px solid #fff;border-right:1px solid #828288;border-bottom:1px solid #828288"></div>
<div class="b" style="left:11px;top:424px;width:87px;height:23px;border-top:1px solid #DEDFE3;border-left:1px solid #DEDFE3;border-right:1px solid #A7A6AC;border-bottom:1px solid #A7A6AC"></div>
<div class="t" style="left:21.00px;top:429px;transform:scaleX(0.9000);transform-origin:0 0;color:#A4A2A8;text-shadow:1px 1px 0 #fff"><u>B</u>oot Record...</div>
<div class="b" style="left:106px;top:423px;width:75px;height:25px;background:#EAE8EC;border-top:1px solid #fff;border-left:1px solid #fff;border-right:1px solid #828288;border-bottom:1px solid #828288"></div>
<div class="b" style="left:107px;top:424px;width:73px;height:23px;border-top:1px solid #DEDFE3;border-left:1px solid #DEDFE3;border-right:1px solid #A7A6AC;border-bottom:1px solid #A7A6AC"></div>
<div class="t" style="left:120.00px;top:429px;transform:scaleX(0.9148);transform-origin:0 0;">Pre<u>v</u>iew...</div>
<div class="b" style="left:192px;top:422px;width:105px;height:26px;background:#EAE8EC;border-top:1px solid #fff;border-left:1px solid #fff;border-right:1px solid #828288;border-bottom:1px solid #828288"></div>
<div class="b" style="left:193px;top:423px;width:103px;height:24px;border-top:1px solid #DEDFE3;border-left:1px solid #DEDFE3;border-right:1px solid #A7A6AC;border-bottom:1px solid #A7A6AC"></div>
<div class="t" style="left:203.00px;top:429px;transform:scaleX(0.8750);transform-origin:0 0;">Cop<u>y</u> to Clipboard</div>
<div class="b" style="left:307px;top:422px;width:76px;height:26px;background:#EAE8EC;border-top:1px solid #fff;border-left:1px solid #fff;border-right:1px solid #828288;border-bottom:1px solid #828288"></div>
<div class="b" style="left:308px;top:423px;width:74px;height:24px;border-top:1px solid #DEDFE3;border-left:1px solid #DEDFE3;border-right:1px solid #A7A6AC;border-bottom:1px solid #A7A6AC"></div>
<div class="t" style="left:319.00px;top:429px;transform:scaleX(0.9259);transform-origin:0 0;">Save <u>A</u>s...</div>
<div class="b" style="left:392px;top:423px;width:75px;height:25px;background:#EAE8EC;border-top:1px solid #fff;border-left:1px solid #fff;border-right:1px solid #828288;border-bottom:1px solid #828288"></div>
<div class="b" style="left:393px;top:424px;width:73px;height:23px;border-top:1px solid #DEDFE3;border-left:1px solid #DEDFE3;border-right:1px solid #A7A6AC;border-bottom:1px solid #A7A6AC"></div>
<div class="t" style="left:398.00px;top:429px;transform:scaleX(0.8773);transform-origin:0 0;">Printer F<u>o</u>nt...</div>
<div class="b" style="left:477px;top:423px;width:62px;height:25px;background:#EAE8EC;border-top:1px solid #fff;border-left:1px solid #fff;border-right:1px solid #828288;border-bottom:1px solid #828288"></div>
<div class="b" style="left:478px;top:424px;width:60px;height:23px;border-top:1px solid #DEDFE3;border-left:1px solid #DEDFE3;border-right:1px solid #A7A6AC;border-bottom:1px solid #A7A6AC"></div>
<div class="t" style="left:494.00px;top:429px;transform:scaleX(0.8586);transform-origin:0 0;"><u>P</u>rint...</div>
<div class="b" style="left:550px;top:423px;width:71px;height:25px;background:#EAE8EC;border-top:1px solid #fff;border-left:1px solid #fff;border-right:1px solid #828288;border-bottom:1px solid #828288"></div>
<div class="b" style="left:551px;top:424px;width:69px;height:23px;border-top:1px solid #DEDFE3;border-left:1px solid #DEDFE3;border-right:1px solid #A7A6AC;border-bottom:1px solid #A7A6AC"></div>
<div class="t" style="left:572.00px;top:429px;transform:scaleX(0.8390);transform-origin:0 0;"><u>C</u>lose</div>
</body></html>
